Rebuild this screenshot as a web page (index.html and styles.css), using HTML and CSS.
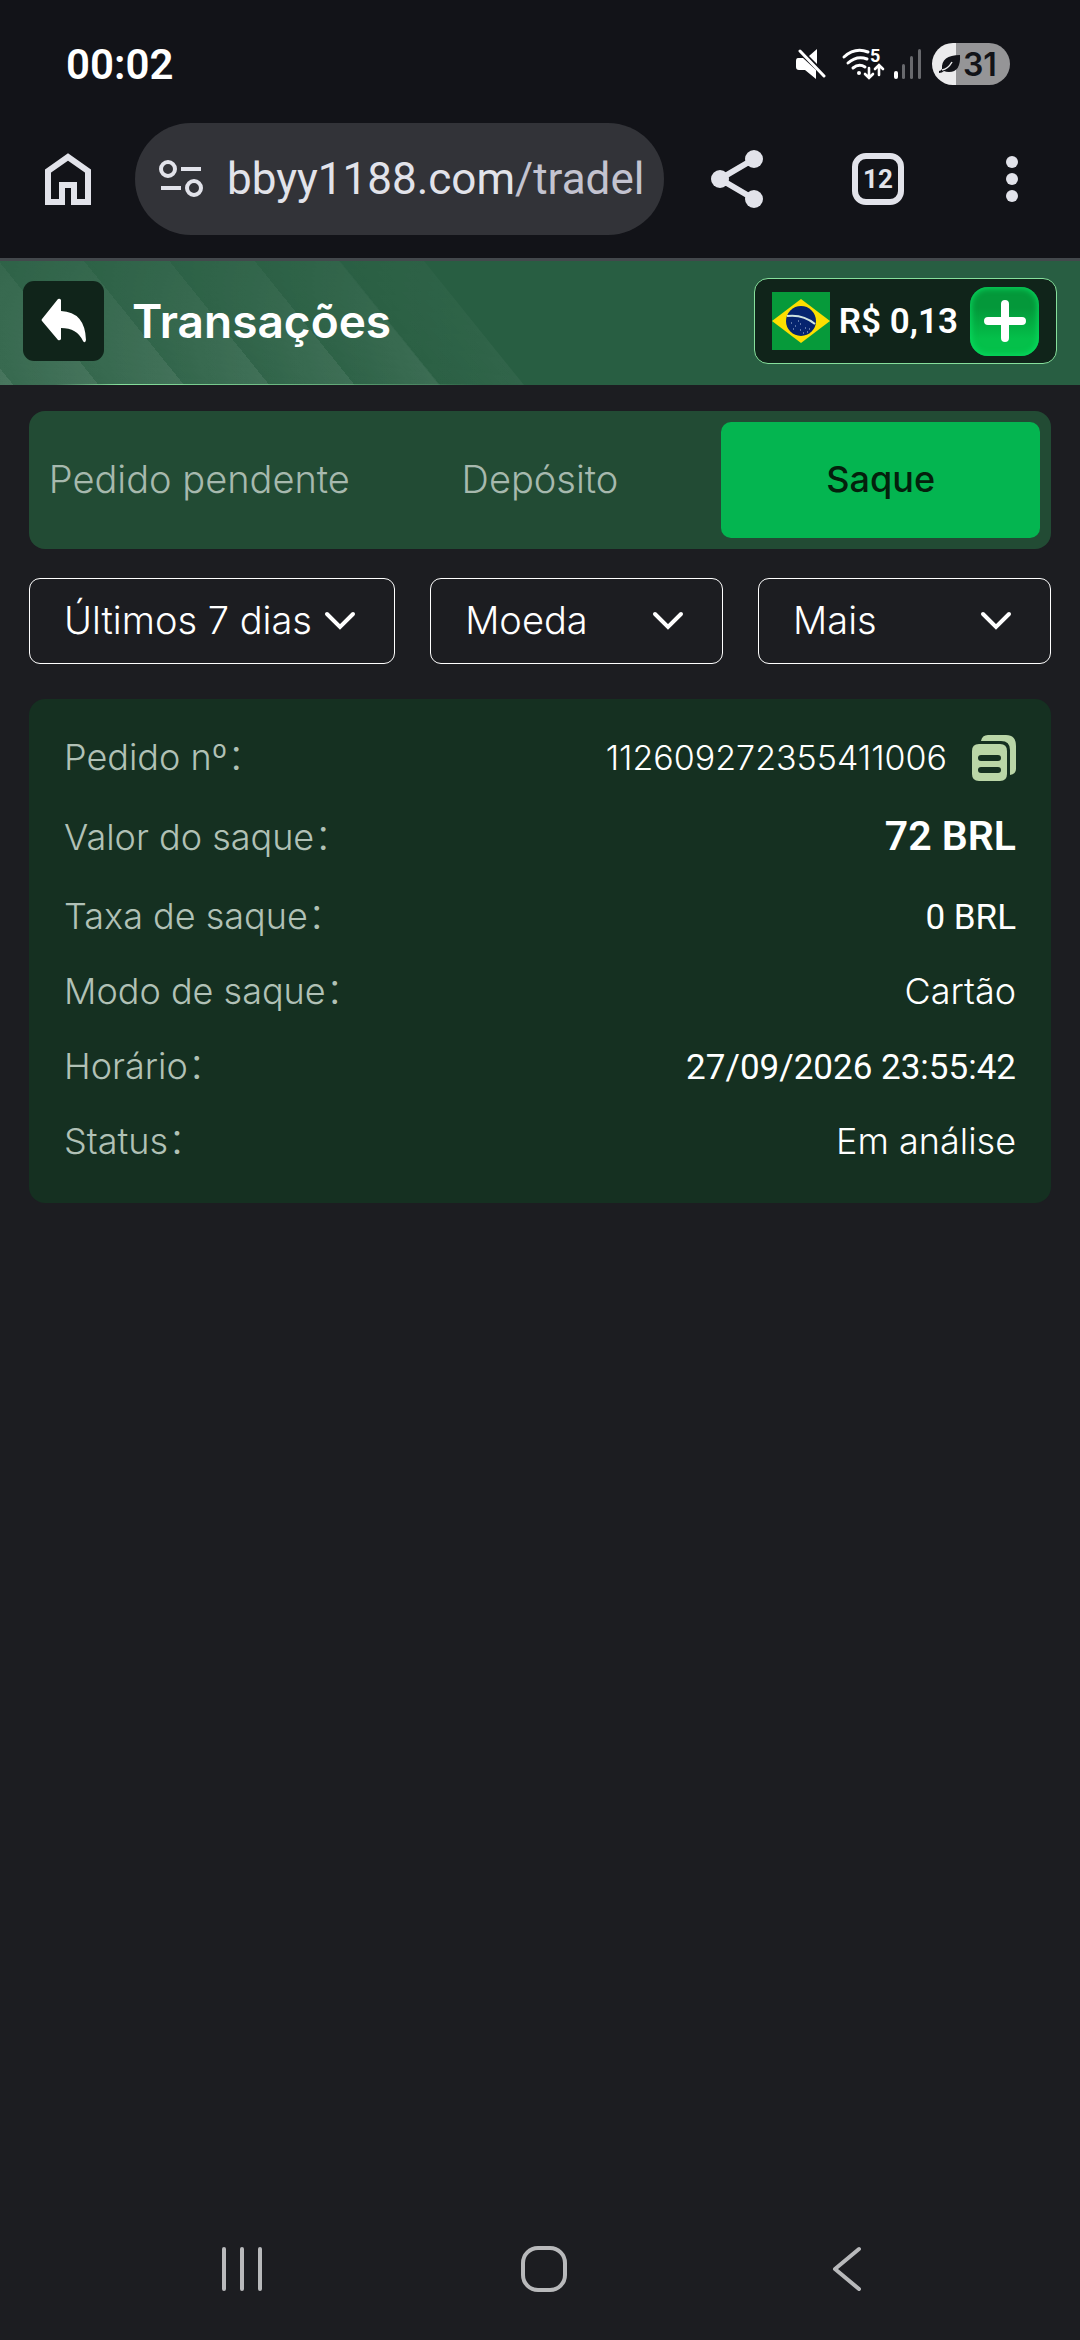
FILE: index.html
```html
<!DOCTYPE html>
<html lang="pt-BR">
<head>
    <meta charset="UTF-8">
    <meta name="viewport" content="width=device-width, initial-scale=1.0">
    <title>Transações</title>
    <link rel="stylesheet" href="styles.css">
</head>
<body>
    <div class="status-bar">
        <span class="time">00:02</span>
        <div class="status-icons">
            <svg class="mute" width="30" height="32" viewBox="0 0 30 32">
                <path d="M2 10h5L20 22v9L9 22H3q-3 0-3-3v-6q0-3 2-3z" fill="#fff"/>
                <path d="M21 1v15L13 8z" fill="#fff"/>
                <path d="M4 3l24 25" stroke="#fff" stroke-width="3" stroke-linecap="round"/>
            </svg>
            <svg class="wifi" width="44" height="32" viewBox="0 0 44 32" fill="none" stroke="#fff" stroke-width="3" stroke-linecap="round">
                <path d="M2 9Q13-1 26 4M6 15q9-8 19-4M11 20q6-5 12-1"/>
                <circle cx="17" cy="25" r="2" fill="#fff" stroke="none"/>
                <path d="M27 20v9M23 26l4 4 4-4M37 27v-9M33 21l4-4 4 4" stroke-width="2.6"/>
                <text x="28" y="14" class="wifi-num">5</text>
            </svg>
            <svg class="signal" width="28" height="32" viewBox="0 0 28 32" fill="#68696d">
                <rect x="0" y="23" width="4" height="8" rx="2" fill="#fff"/>
                <rect x="8" y="16" width="3" height="15" rx="1.5"/>
                <rect x="16" y="8" width="3" height="23" rx="1.5"/>
                <rect x="24" y="1" width="3" height="30" rx="1.5"/>
            </svg>
            <div class="battery">
                <svg width="22" height="20" viewBox="0 0 22 20">
                    <path d="M21 1q1 17-11 17-3 0-5-1-2 2-5 2l0-2q2 0 3-2Q2 1 21 1z" fill="#121318"/>
                    <path d="M3 16q6-1 10-8" stroke="#ebebec" stroke-width="1.5" fill="none"/>
                </svg>
                <span>31</span>
            </div>
        </div>
    </div>

    <div class="browser-bar">
        <button class="bar-button" aria-label="Início">
            <svg width="46" height="52" viewBox="0 0 46 52">
                <path d="M3 49V18L23 4l20 14v31H29V32H17v17z" fill="none" stroke="#e2e3ea" stroke-width="6"/>
            </svg>
        </button>
        <button class="url">
            <svg width="44" height="38" viewBox="0 0 44 38" fill="none" stroke="#e2e3ea" stroke-width="4">
                <circle cx="9" cy="9" r="7"/>
                <circle cx="35" cy="28" r="7"/>
                <path d="M22 9h20M2 28h20"/>
            </svg>
            <span class="url-text">bbyy1188.com<span class="url-path">/tradel</span></span>
        </button>
        <button class="bar-button share" aria-label="Compartilhar">
            <svg width="52" height="58" viewBox="0 0 52 58" fill="#e2e3ea">
                <path d="M43 9L9 29l34 20" fill="none" stroke="#e2e3ea" stroke-width="6"/>
                <circle cx="43" cy="9" r="9"/>
                <circle cx="9" cy="29" r="9"/>
                <circle cx="43" cy="49" r="9"/>
            </svg>
        </button>
        <button class="bar-button tab-count">12</button>
        <button class="bar-button more" aria-label="Menu">
            <svg width="12" height="48" viewBox="0 0 12 48" fill="#e2e3ea">
                <circle cx="6" cy="7" r="6"/>
                <circle cx="6" cy="24" r="6"/>
                <circle cx="6" cy="41" r="6"/>
            </svg>
        </button>
    </div>

    <header class="header">
        <svg class="stripes" width="560" height="124" viewBox="0 0 560 124">
            <defs>
                <linearGradient id="stripe" gradientUnits="userSpaceOnUse" spreadMethod="repeat" x1="84" y1="0" x2="135.7" y2="-41.7">
                    <stop offset="0" stop-color="#fff" stop-opacity="0.01"/>
                    <stop offset="1" stop-color="#fff" stop-opacity="0.09"/>
                </linearGradient>
                <linearGradient id="fade" x2="0" y2="1">
                    <stop offset="0" stop-color="#fff" stop-opacity="0.4"/>
                    <stop offset="1" stop-color="#fff"/>
                </linearGradient>
                <linearGradient id="haze" x1="0" y1="1" x2="1" y2="1">
                    <stop offset="0" stop-color="#fff" stop-opacity="0.07"/>
                    <stop offset="1" stop-color="#fff" stop-opacity="0"/>
                </linearGradient>
                <linearGradient id="glow">
                    <stop offset="0" stop-color="#86e09c" stop-opacity="0"/>
                    <stop offset="0.15" stop-color="#86e09c"/>
                    <stop offset="0.6" stop-color="#86e09c" stop-opacity="0.6"/>
                    <stop offset="1" stop-color="#86e09c" stop-opacity="0"/>
                </linearGradient>
                <mask id="stripe-mask">
                    <rect width="560" height="124" fill="url(#fade)"/>
                </mask>
            </defs>
            <g mask="url(#stripe-mask)">
                <path d="M0 0H424L524 124H0z" fill="url(#haze)"/>
                <path d="M0 0H339L439 124H0z" fill="url(#stripe)"/>
                <path d="M339 0H424L524 124H439z" fill="url(#stripe)" opacity="0.5"/>
            </g>
            <rect x="55" y="123" width="430" height="1" fill="url(#glow)"/>
        </svg>
        <button class="back" aria-label="Voltar">
            <svg width="46" height="46" viewBox="0 0 46 46">
                <path d="M20 2v11q24 1 25 29-1 4-3 1Q36 30 20 30v11q-1 2-3 1L1 23q-1-1 0-2L17 1q2-1 3 1z" fill="#fff"/>
            </svg>
        </button>
        <h1>Transações</h1>
        <div class="balance">
            <svg width="58" height="58" viewBox="0 0 58 58">
                <rect width="58" height="58" fill="#069a3a"/>
                <path d="M29 7l29 22-29 22L0 29z" fill="#fcdf00"/>
                <circle cx="29" cy="29" r="15" fill="#05246f"/>
                <path d="M15 24q16-2 28 8" stroke="#cfe3e0" stroke-width="2" fill="none"/>
                <path d="M19 31h1M23 34h1M21 37h1M28 32h1M28 38h1M33 36h1M37 37h1M31 41h1M35 40h1M26 29h1" stroke="#b5c4e0" stroke-width="1"/>
            </svg>
            <span class="amount">R$ 0,13</span>
            <button class="add" aria-label="Adicionar">
                <svg width="42" height="42" viewBox="0 0 42 42">
                    <path d="M21 4v34M4 21h34" stroke="#fff" stroke-width="8" stroke-linecap="round"/>
                </svg>
            </button>
        </div>
    </header>

    <main class="content">
        <div class="tabs">
            <button>Pedido pendente</button>
            <button>Depósito</button>
            <button class="active">Saque</button>
        </div>

        <div class="filters">
            <label class="filter">
                <select aria-label="Período"><option>Últimos 7 dias</option></select>
                <svg width="32" height="20" viewBox="0 0 32 20"><path d="M3 3l13 13L29 3"/></svg>
            </label>
            <label class="filter">
                <select aria-label="Moeda"><option>Moeda</option></select>
                <svg width="32" height="20" viewBox="0 0 32 20"><path d="M3 3l13 13L29 3"/></svg>
            </label>
            <label class="filter">
                <select aria-label="Mais"><option>Mais</option></select>
                <svg width="32" height="20" viewBox="0 0 32 20"><path d="M3 3l13 13L29 3"/></svg>
            </label>
        </div>

        <dl class="order">
            <div class="row">
                <dt>Pedido nº：</dt>
                <dd class="order-id">112609272355411006
                    <button class="copy" aria-label="Copiar">
                        <svg width="44" height="46" viewBox="0 0 44 46" fill="#bad6a7">
                            <path d="M9 6q1-6 7-6h18q10 0 10 11v23q0 5-6 6V15q0-9-9-9z"/>
                            <path fill-rule="evenodd" d="M7 9h21q7 0 7 7v23q0 7-7 7H7q-7 0-7-7V16q0-7 7-7zM9 20a3 3 0 0 0 0 6h17a3 3 0 0 0 0-6zM9 32a3 3 0 0 0 0 6h17a3 3 0 0 0 0-6z"/>
                        </svg>
                    </button>
                </dd>
            </div>
            <div class="row total">
                <dt>Valor do saque：</dt>
                <dd>72 BRL</dd>
            </div>
            <div class="row">
                <dt>Taxa de saque：</dt>
                <dd class="num">0 BRL</dd>
            </div>
            <div class="row">
                <dt>Modo de saque：</dt>
                <dd>Cartão</dd>
            </div>
            <div class="row">
                <dt>Horário：</dt>
                <dd class="num">27/09/2026 23:55:42</dd>
            </div>
            <div class="row">
                <dt>Status：</dt>
                <dd>Em análise</dd>
            </div>
        </dl>
    </main>

    <nav class="system-nav">
        <button aria-label="Recentes">
            <svg width="42" height="46" viewBox="0 0 42 46"><path d="M3 3v40M21 3v40M39 3v40"/></svg>
        </button>
        <button aria-label="Tela inicial">
            <svg width="46" height="46" viewBox="0 0 46 46"><rect x="2" y="2" width="42" height="42" rx="15"/></svg>
        </button>
        <button aria-label="Voltar">
            <svg width="30" height="46" viewBox="0 0 30 46"><path d="M27 3L3 23l24 20"/></svg>
        </button>
    </nav>
</body>
</html>
```
FILE: styles.css
```css
* {
    box-sizing: border-box;
}
body {
    margin: 0;
    min-height: 100vh;
    display: flex;
    flex-direction: column;
    background: #1c1d21;
    color: #fff;
    font-family: Inter, 'Noto Sans CJK SC', sans-serif;
    font-size: 36px;
}
button {
    padding: 0;
    border: none;
    background: none;
    color: inherit;
    font: inherit;
    cursor: pointer;
}
svg {
    display: block;
    flex-shrink: 0;
}

/* phone status bar */
.status-bar {
    display: flex;
    justify-content: space-between;
    align-items: center;
    height: 123px;
    padding: 5px 70px 0 66px;
    background: #121318;
}
.time {
    font-family: Roboto, sans-serif;
    font-size: 42px;
    font-weight: 600;
}
.status-icons {
    display: flex;
    align-items: center;
}
.wifi {
    margin-left: 16px;
    overflow: visible;
}
.wifi-num {
    font-family: Roboto, sans-serif;
    font-size: 18px;
    font-weight: 700;
    fill: #fff;
    stroke: none;
}
.signal {
    margin-left: 8px;
}
.battery {
    display: flex;
    align-items: center;
    gap: 2px;
    width: 78px;
    height: 42px;
    margin-left: 10px;
    padding-left: 7px;
    border-radius: 21px;
    background: linear-gradient(to right, #ebebec 24px, #959597 24px);
    color: #121318;
    font-family: Inter, sans-serif;
    font-size: 32px;
    font-weight: 600;
}

/* browser toolbar */
.browser-bar {
    display: flex;
    align-items: center;
    height: 138px;
    padding: 0 62px 23px 45px;
    background: #121318;
    border-bottom: 3px solid #43484c;
    color: #e2e3ea;
}
.url {
    display: flex;
    flex: 1;
    align-items: center;
    gap: 24px;
    height: 112px;
    min-width: 0;
    margin-left: 44px;
    padding: 0 16px 0 24px;
    border-radius: 56px;
    background: #323338;
    font-family: Roboto, sans-serif;
    font-size: 44px;
}
.url-text {
    overflow: hidden;
    white-space: nowrap;
}
.url-path {
    color: #c3c3d0;
}
.share {
    margin-left: 47px;
}
.tab-count {
    width: 52px;
    height: 52px;
    margin-left: 89px;
    border: 6px solid #e2e3ea;
    border-radius: 14px;
    font-family: Roboto, sans-serif;
    font-size: 26px;
    font-weight: 700;
}
.more {
    margin-left: 102px;
}

/* page header */
.header {
    position: relative;
    display: flex;
    align-items: center;
    height: 124px;
    padding: 0 23px 4px;
    background: #285e42;
}
.stripes {
    position: absolute;
    top: 0;
    left: 0;
}
.back {
    position: relative;
    display: flex;
    align-items: center;
    justify-content: center;
    width: 81px;
    height: 80px;
    border-radius: 11px;
    background: #10241a;
}
.header h1 {
    position: relative;
    flex: 1;
    margin: 0 0 0 28px;
    font-size: 46px;
    font-weight: 600;
}
.balance {
    display: flex;
    align-items: center;
    height: 86px;
    padding: 0 17px;
    border: 1px solid #86e09c;
    border-radius: 14px;
    background: #10241a;
}
.amount {
    margin: 0 12px 0 9px;
    font-family: Roboto, sans-serif;
    font-size: 35px;
    font-weight: 600;
}
.add {
    display: flex;
    align-items: center;
    justify-content: center;
    width: 69px;
    height: 69px;
    border-radius: 18px;
    background: linear-gradient(#04983a 30%, #04c04a 75%);
    box-shadow: inset 0 0 6px 1px #07df62;
}

.content {
    flex: 1;
    padding: 26px 29px;
}
.tabs {
    display: grid;
    grid-template-columns: repeat(3, 1fr);
    gap: 22px;
    height: 138px;
    padding: 11px;
    border-radius: 16px;
    background: #224b34;
}
.tabs button {
    padding-bottom: 3px;
    border-radius: 10px;
    color: #a7b9ae;
    font-weight: 300;
    font-size: 38px;
    white-space: nowrap;
}
.tabs .active {
    background: #04b550;
    color: #04200c;
    font-size: 36px;
    font-weight: 500;
}
.filters {
    display: grid;
    grid-template-columns: 5fr 4fr 4fr;
    gap: 35px;
    margin-top: 29px;
}
.filter {
    display: grid;
    align-items: center;
}
.filter select {
    grid-area: 1 / 1;
    width: 100%;
    height: 86px;
    padding: 0 72px 3px 34px;
    border: 1px solid #fff;
    border-radius: 11px;
    background: none;
    color: #fff;
    font: inherit;
    font-weight: 300;
    font-size: 38px;
    appearance: none;
}
.filter svg {
    grid-area: 1 / 1;
    justify-self: end;
    margin-right: 39px;
    fill: none;
    stroke: #fff;
    stroke-width: 4;
    stroke-linecap: round;
    pointer-events: none;
}

/* withdrawal card */
.order {
    margin: 35px 0 0;
    padding: 22px 35px 23px;
    border-radius: 16px;
    background: #153021;
    font-weight: 300;
}
.row {
    display: flex;
    justify-content: space-between;
    align-items: baseline;
    height: 75px;
    line-height: 72px;
}
.row dt {
    color: #b1c1b6;
}
.row dd {
    display: flex;
    align-items: center;
    gap: 25px;
    margin: 0;
}
.row .order-id {
    font-size: 34px;
}
.row .num {
    font-family: Roboto, sans-serif;
    font-size: 35px;
    font-weight: 400;
}
.total {
    height: 84px;
    line-height: 81px;
}
.total dd {
    font-family: Roboto, sans-serif;
    font-size: 41px;
    font-weight: 600;
}

/* android navigation */
.system-nav {
    display: flex;
    height: 142px;
    padding: 0 82px 0 91px;
}
.system-nav button {
    display: flex;
    flex: 1;
    align-items: center;
    justify-content: center;
}
.system-nav svg {
    fill: none;
    stroke: #b8b9bb;
    stroke-width: 4;
    stroke-linecap: round;
    stroke-linejoin: round;
}
```
